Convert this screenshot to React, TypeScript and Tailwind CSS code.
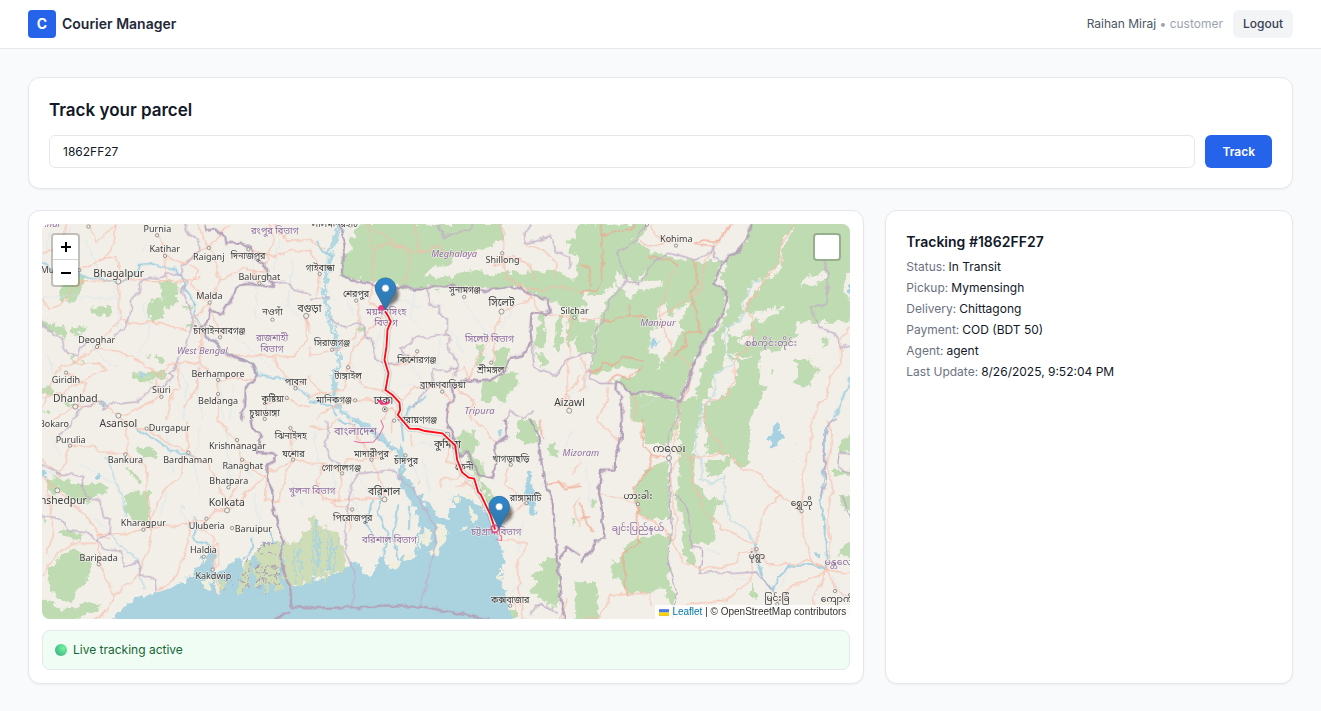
import { useState } from "react";

type Shape = { x: number; y: number; d: string };
type Label = [x: number, y: number, text: string, kind?: "city" | "region" | "country" | "state"];

// Map geometry is kept in six blocks, each offset by x / y in map units.
const FOREST: Shape[] = [
  { x: 0, y: 0, d: "M55 182L85 170 128 164 132 190 120 215 118 240 98 245 85 238 58 240 54 220 66 205ZM358 186L372 182 410 185 413 215 405 230 420 248 385 262 368 258 372 282 350 296 345 308 322 304 328 285 320 275 325 248 342 236 368 236 370 212 362 205ZM150 262L180 258 212 262 208 280 188 292 160 282 150 275ZM95 330L118 316 140 322 118 338 100 346ZM6 302L22 302 40 316 66 322 86 338 74 352 50 344 30 330 6 322ZM436 314L455 308 462 322 444 328ZM270 458L295 452 318 462 338 448 366 450 378 460 372 478 345 474 330 484 296 484 272 470ZM120 428L138 432 130 440ZM88 408L105 412 96 425ZM344 412L370 410 378 425 352 428ZM316 404L336 402 330 412ZM6 498L28 500 46 510 40 524 18 522 6 526ZM70 550L95 545 112 555 85 562ZM426 258L452 256 458 264 430 268ZM8 570L36 572 30 584Z" },
  { x: 810, y: 0, d: "M150 12L580 12 575 60 545 78 500 90 430 105 410 140 370 140 340 168 420 176 450 158 510 152 540 172 590 150 640 168 655 150 700 158 740 150 790 180 810 184 830 262 760 262 720 240 670 222 620 198 560 210 520 205 430 196 330 204 240 200 180 188 92 166 98 108 132 92 115 68ZM770 60L830 50 830 98 780 104ZM504 370L516 372 518 430 500 436ZM555 398L580 380 596 388 590 450 552 440ZM520 485L555 478 590 460 622 455 628 495 600 515 580 550 550 530 540 545 512 540ZM142 320L165 318 162 334 148 336ZM370 210L392 208 388 218 374 218ZM690 270L706 280 700 330 712 340 700 380 680 388 674 350 684 330ZM740 282L760 290 752 340 760 360 742 392 728 380 738 340ZM775 270L800 260 806 330 780 380 768 360ZM680 400L708 400 716 432 690 442Z" },
  { x: 1620, y: 0, d: "M-10 12L200 12 190 50 160 62 200 82 220 100 260 102 300 118 345 122 425 125 405 190 440 215 435 260 410 320 380 350 340 420 302 548 262 528 205 520 150 520 110 485 60 488 32 455 40 400 48 330 64 285 84 235 110 215 108 190 60 230 -10 210ZM510 0L830 0 830 305 650 305 648 345 628 370 600 390 540 395 536 490 562 500 545 535 510 595 505 730 482 750 452 705 300 700 298 545 345 530 370 430 390 350 430 310 448 240 420 170 430 128 500 65ZM724 356L744 354 742 378 724 378ZM640 420L694 420 694 440 716 438 714 465 694 466 692 498 640 494 650 470ZM568 442L576 440 576 462 568 465ZM-10 300L48 302 38 400 -10 398ZM150 516L300 546 290 620 262 672 196 672 186 610 150 600Z" },
  { x: 0, y: 600, d: "M28 450L70 405 96 388 124 394 148 420 152 450 138 488 118 505 104 540 76 546 50 528 30 500 24 472ZM40 168L65 176 85 180 120 195 150 190 180 192 205 202 200 222 165 226 145 246 110 240 82 228 55 198ZM255 232L270 215 300 220 330 212 328 250 336 288 316 314 278 302 252 274ZM280 90L305 80 330 84 355 96 346 108 305 104ZM252 142L270 148 290 165 308 185 300 195 280 170ZM0 532L36 548 60 575 110 560 148 546 180 556 170 572 128 582 98 610 0 610ZM0 280L20 300 12 315ZM60 330L100 335 132 345 125 362 85 355 60 345ZM20 170L48 180 60 215 42 232 24 205Z" },
  { x: 810, y: 600, d: "M438 46L460 38 498 36 504 75 486 92 495 118 520 134 524 175 505 178 480 140 468 98 448 112ZM505 182L525 190 548 235 562 262 570 298 555 290 530 245ZM622 0L676 0 682 40 690 68 650 72 620 50ZM712 66L735 64 732 80 748 94 736 110 714 105ZM658 468L690 450 700 420 740 412 750 480 745 565 712 556 694 530 660 520 664 505 690 486ZM785 290L795 292 790 325ZM798 486L815 486 815 610 798 610ZM600 560L620 580 618 598 600 590Z" },
  { x: 1620, y: 600, d: "M294 80L345 80 345 110 340 170 362 205 372 232 398 234 432 246 402 256 402 290 400 368 340 374 330 390 346 410 344 436 318 418 306 384 310 300 288 240 298 170 292 90ZM372 128L400 122 460 110 440 145 420 165 388 172ZM200 148L222 136 262 126 268 200 272 296 215 298 172 284 162 235 172 188ZM184 348L272 344 265 430 264 490 290 520 282 560 266 550 254 500 210 515 140 520 122 480 96 475 96 420 120 420 134 380ZM-10 486L52 486 52 610 -10 610ZM34 240L46 238 46 262 34 262ZM778 70L830 30 830 95 776 100ZM755 150L830 148 830 165 768 170ZM776 228L830 216 830 285 790 270ZM796 370L830 360 830 420 770 400ZM512 480L522 510 530 538 512 530Z" },
];

const CLEARINGS: Shape[] = [
  { x: 1620, y: 0, d: "M108 190L112 160 135 172 165 185 190 158 188 186 245 180 240 202 205 206 176 215 150 235 125 215ZM234 262L252 250 270 290 302 262 330 250 296 310 308 330 290 360 278 392 262 404 235 448 240 410 212 398 208 360 215 330 228 320ZM220 0L505 0 500 60 470 92 430 125 400 122 400 92 370 90 345 104 310 118 290 112 235 100 250 80 218 48ZM545 178L520 182 508 215 488 245 490 270 470 310 440 320 445 340 480 352 500 330 520 300 550 302 612 268 590 258 560 272 510 284 494 272 510 235 540 200ZM635 20L600 80 600 130 560 170 548 184 590 160 608 130 606 85 640 30ZM405 320L398 380 358 462 340 505 352 530 300 545 342 418 380 352ZM715 158L740 160 730 180 705 196 675 190 662 206 668 180ZM782 210L796 160 820 158 820 240 796 232ZM425 130L442 140 432 155 420 150ZM36 465L110 440 172 448 165 470 100 482 60 490ZM432 318L446 345 440 400 470 430 470 480 448 512 400 542 372 560 366 600 382 640 378 700 338 715 348 640 362 590 366 560 392 500 400 465 430 440 436 400 424 360ZM446 400L500 408 520 412 470 418ZM470 360L500 350 530 356 500 372ZM430 450L446 470 436 500 410 514 408 480Z" },
];

const MANGROVE: Shape[] = [
  { x: 0, y: 600, d: "M728 378L760 362 775 370 790 335 810 330 810 494 790 480 780 498 764 490 755 502 734 476ZM655 384L690 372 724 364 722 395 724 440 715 470 728 505 714 515 696 488 680 524 668 488 644 510 642 450 652 425 642 400ZM618 412L636 418 634 460 620 500 608 526 590 520 602 470ZM545 468L556 482 550 510 534 498Z" },
  { x: 810, y: 600, d: "M-2 300L12 290 24 298 35 325 52 316 70 335 84 345 106 400 104 450 86 460 76 448 64 470 52 455 44 488 30 465 20 478 8 470 -2 494Z" },
];

const SEA: Shape[] = [
  { x: 0, y: 600, d: "M208 610L240 568 275 542 330 524 370 510 420 494 455 466 474 442 484 412 504 404 520 384 528 410 520 452 545 458 560 440 582 424 604 412 612 450 632 408 648 405 665 375 696 370 724 364 734 460 748 500 770 495 812 488 812 610Z" },
  { x: 810, y: 600, d: "M-10 476L28 480 60 466 104 450 124 428 150 434 154 458 182 466 198 440 212 405 228 432 248 428 240 452 258 448 274 405 300 424 322 392 318 360 330 315 312 262 288 230 270 196 262 170 272 130 262 96 274 70 282 92 284 130 278 160 304 190 320 212 360 262 392 296 408 298 438 258 424 238 430 226 456 226 488 240 516 262 538 288 550 328 566 360 576 388 580 430 574 472 586 520 600 560 614 610 -10 610Z" },
];

const ISLANDS: Shape[] = [
  { x: 0, y: 600, d: "M494 405L502 412 492 434 484 430ZM505 470L516 476 510 512 494 505 488 485ZM525 475L535 480 542 520 532 526 528 505Z" },
  { x: 810, y: 600, d: "M430 232L446 228 452 240 446 250 432 246ZM472 264L486 266 500 294 494 316 480 306ZM462 318L472 318 470 330 458 326ZM385 306L398 310 412 335 406 362 388 382 384 400 370 408 364 396 378 366 376 340ZM346 325L362 328 364 360 350 380 340 370 336 350ZM330 335L338 360 332 385 324 380ZM292 395L306 402 292 424 280 420ZM240 418L262 420 268 436 248 452 236 440ZM566 450L572 445 574 480 568 482ZM468 222L490 232 484 240 472 236Z" },
];

const RIVERS: Shape[] = [
  { x: 0, y: 0, d: "M0 126L40 150 70 142 92 162 130 172 180 176 226 186 262 182 286 158 300 134 334 130 376 144 402 148 428 176 430 206 462 240 464 286 484 322 498 352 534 376 566 404 606 420 640 430 652 460 694 472 738 478 770 506 810 530" },
  { x: 0, y: 600, d: "M276 10L318 46 352 62 392 94 440 102 462 110M462 290L470 316 460 350 478 366 510 376 520 400M612 410L640 392 636 350M700 370L690 330" },
  { x: 810, y: 0, d: "M350 530L300 560 284 600M20 60L40 95 66 110M0 540L60 555 84 590" },
  { x: 810, y: 600, d: "M130 0L190 44 240 82 270 92M274 0L280 70M208 200L206 280 232 340 218 410M186 240L168 310 190 350M262 250L250 340 262 420M300 260L296 330M18 300L22 440M66 350L60 450M84 0L140 20M655 156L650 190 668 212 658 234 668 288M568 28L574 50" },
  { x: 1620, y: 0, d: "M810 470L796 520 780 560 760 596" },
  { x: 1620, y: 600, d: "M524 370L530 420 552 480 578 512 590 480 630 440 690 434 736 450 736 330 720 250 734 130 734 30 760 0" },
];

const STREAMS: Shape[] = [
  { x: 0, y: 0, d: "M92 24L60 70 80 130M220 186L232 240 236 330M300 96L330 60M6 236L90 225 150 234 230 236M610 60L640 150 650 220 648 300M700 150L720 60M480 400L470 500 490 600M540 480L550 600M130 340L190 420 230 440M280 460L330 468M180 540L200 548M410 420L440 500 430 600M760 120L740 260 790 300M580 500L570 600M140 60L170 140M30 30L20 90M560 330L600 360 690 440M310 250L330 340 300 400M20 400L50 480" },
  { x: 810, y: 0, d: "M140 220L150 300 120 420 150 500M210 330L190 400 240 500M320 210L300 290 340 330M450 230L500 300 550 350M540 420L500 380M620 250L570 320M260 240L330 260M300 430L330 480M390 360L380 440M740 560L790 520M560 560L600 540M280 490L330 500 350 530M110 230L130 290M420 330L460 400" },
  { x: 0, y: 600, d: "M6 150L60 170M120 130L170 160 240 200M480 20L460 140 480 220M560 30L570 180M380 30L400 160M420 250L440 320M620 140L640 180M150 290L200 320M60 250L30 210M760 180L790 260M640 220L660 330M780 40L740 100M30 50L70 110M380 220L360 280" },
  { x: 810, y: 600, d: "M180 0L210 60M330 70L400 90M340 120L360 220M10 20L30 160M60 110L80 220M640 300L620 400M580 300L600 340M600 520L640 490M720 150L690 200M786 30L760 90M120 140L130 240 150 290M150 180L186 240M290 110L330 190" },
  { x: 1620, y: 0, d: "M0 430L20 470M212 350L232 360 220 380M290 280L304 270M760 440L768 438M6 470L20 520M180 560L230 540" },
  { x: 1620, y: 600, d: "M380 390L420 400M450 470L500 480M700 540L720 520M630 130L640 126M640 70L650 70M560 510L550 600M620 460L600 500M760 470L790 540M20 140L30 260" },
];

// The Chindwin and the upper Kolodyne headwaters.
const LIGHT_RIVERS: Shape[] = [
  { x: 0, y: 600, d: "M196 110L230 190 248 240 258 290M210 344L260 390 292 420 300 470 316 510" },
  { x: 1620, y: 0, d: "M540 180L512 190 508 222 486 250 490 290 470 310 436 320 432 350 438 392 460 430 430 444 400 465 408 500 386 545 362 560 364 600" },
  { x: 1620, y: 600, d: "M364 0L346 40 344 80 368 150 360 178 400 190 434 168 430 230 452 300 500 330 524 370" },
];

const LAKES: Shape[] = [
  { x: 1620, y: 600, d: "M560 50L578 46 574 24 584 14 598 18 600 34 610 46 604 60 592 62 590 80 576 82 570 66 556 62ZM704 396L718 400 716 412 702 410Z" },
  { x: 1620, y: 0, d: "M212 352L228 350 232 366 222 380 210 374ZM804 200L820 195 820 235 804 230Z" },
  { x: 810, y: 600, d: "M650 156L662 160 664 200 680 222 672 240 676 290 662 282 648 240 642 200 654 190Z" },
  { x: 0, y: 600, d: "M160 168L175 158 188 168 180 178ZM0 150L22 155 18 172 0 170ZM424 258L430 256 430 268Z" },
  { x: 0, y: 0, d: "M300 462L312 456 318 468 306 476ZM182 538L196 540 200 554 186 560Z" },
];

const ROADS: Shape[] = [
  { x: 0, y: 0, d: "M80 12L68 60 40 90 6 100M150 12L170 70 228 12M228 12L222 70 190 114M190 114L120 150 90 180 120 186 240 180 430 184 480 170M350 40L375 108 380 180M375 108L430 130 500 84M240 180L230 110 190 114M235 186L240 300 170 380M240 300L300 312 360 306 410 328 450 330M6 240L30 268 60 258 100 210 120 186M170 380L100 432 60 440 30 500 6 560M170 380L240 396 310 430 350 460 380 480M100 432L180 430 200 450 150 470 60 520 6 530M78 456L140 490 110 560M106 560L180 548 240 590 360 532M106 560L40 600M364 530L350 480 390 430 450 428 480 430 534 480 534 600M480 430L484 330 460 300 508 248M508 248L540 180 510 90 470 12M508 248L530 320 550 352M452 134L470 150 450 190 500 240M508 84L570 12M540 180L610 146 670 160 700 60 690 12M625 88L700 110 760 90 810 96M658 190L640 150M810 290L798 290 810 340M798 290L800 360 760 410 700 408 660 404 560 410M700 410L720 450 766 504M740 534L680 550 674 600M410 434L420 500 400 510 380 600M534 480L600 474 640 480M430 560L470 500 480 440M700 12L740 60 810 60M766 504L810 470M740 534L780 560 810 556" },
  { x: 810, y: 0, d: "M0 90L30 160 20 230M0 60L50 90M172 12L190 100 188 190 180 250 216 262M188 95L230 70 330 98 390 80 412 108 500 100M190 30L290 90 300 130 280 200M310 12L330 98M576 12L580 90 550 140 610 110 650 130 680 180M640 70L700 90 740 130 738 170M575 100L590 170 630 200 660 230 640 250 574 272M574 272L552 340 550 420 542 430M660 230L690 280 790 294M552 340L500 420 480 480 460 440 430 460 430 500M138 240L150 330 90 390 60 384M66 388L0 410 0 380M114 442L120 400 160 350 216 290M114 442L160 500 210 510 232 512M134 540L180 540 230 560M232 512L280 540 310 500 390 500 400 510M222 430L290 430 320 394M396 512L420 540 410 600M40 520L100 510 114 442M0 480L40 520 0 530M430 500L490 540 480 600M790 294L770 350 780 400 770 470 776 570M620 200L700 210 760 200 810 215M740 560L810 470M216 600L240 560 270 600M20 600L60 560 134 540" },
  { x: 0, y: 600, d: "M6 170L50 210 90 240 140 290 176 344M6 120L60 170 90 76 160 80 210 100 256 102M256 102L264 60 256 0M256 102L320 140 326 300M176 344L260 340 310 328 400 316 496 300 530 270 560 270M310 328L340 280 360 230 390 190 420 170 430 130 445 98M240 0L320 30 390 70 445 98M445 98L500 130 530 180 560 270M445 98L440 0M530 0L560 30 590 60 606 118 600 170 570 240M176 344L176 430 200 480 222 530M176 370L100 370 50 400 6 470M176 344L210 360M222 530L200 570 160 600M222 530L290 470 300 440 330 380 330 310M360 510L410 470 430 400 450 340 445 300M496 300L480 330 520 350 520 450M520 380L536 370 534 430 520 450M606 118L680 180 676 240 720 245M758 118L810 130M758 118L710 150 680 150M750 20L758 118M758 118L730 180 720 240 690 245M20 180L30 280 45 330 20 400M560 270L600 240 640 200 680 160M520 450L540 520" },
  { x: 810, y: 600, d: "M0 20L50 30 80 0M0 130L40 130 96 158 110 120 184 118M96 158L90 230 60 250 126 268M0 210L60 240 110 235 220 236 222 200 184 118M126 268L120 330M184 118L250 90M250 0L240 40M300 40L310 80M390 205L394 176 440 176 456 160M318 195L326 178M420 50L410 120 450 150M440 200L470 190 500 210 520 262M553 328L570 360 600 360 650 368 636 400 620 420 624 480 630 530 640 600M570 350L562 300 602 280 650 248M602 130L580 190 620 220 650 248M490 0L520 20 546 60 560 70M600 556L620 530 616 590M810 190L780 200 740 186 712 190M786 160L810 120M810 230L790 260 810 320M770 540L750 600M40 130L20 200 40 240M184 118L150 60 120 0" },
  { x: 1620, y: 0, d: "M295 130L270 180 240 260 240 310 270 370 266 420M240 290L300 250 340 230 360 210 372 130 410 70 455 12M640 12L600 80 602 120 560 170 520 230 490 270 515 290 520 330 500 380 460 430 466 480 440 530 380 545 370 600M780 360L810 320M780 360L782 430 750 470 740 530 710 560 700 600M50 600L80 540 84 500M0 410L20 450 0 520M0 300L60 300M280 400L300 410 332 440 320 520 300 545 296 600M155 510L170 560 160 600M215 12L225 50 280 60 200 80 165 55" },
  { x: 1620, y: 600, d: "M296 0L280 80 300 100 330 112M300 110L270 150 275 230 290 300 280 360 310 430 370 445 470 430 480 400 524 390M330 112L335 180 370 270 420 320 520 370M330 112L410 104 440 100 490 148 540 160 570 205 600 225M524 370L540 300 570 250 600 225 650 260 664 274M664 274L670 140 690 90 694 0M664 274L670 360 700 430 740 450M524 380L560 430 640 434 690 420 740 450M740 450L750 360 740 300 756 200 738 130 760 60 740 0M740 450L810 460M740 450L770 510 810 540M740 450L700 540 730 600M740 455L630 498 610 520 594 550M524 390L510 480 440 540 300 555M55 220L170 250 176 280 240 320 280 360M0 600L60 590 90 530 130 520 210 520 212 560M50 0L70 20 120 65M370 0L390 40 425 80 410 104" },
];

// Hill roads, drawn stronger than the trunk network.
const HILL_ROADS: Shape[] = [
  { x: 1620, y: 0, d: "M60 12L66 50 64 180 50 210 0 218M66 48L100 40 150 30 162 12M0 135L25 140 32 200M400 78L340 70 370 60 420 66 446 12M345 122L350 190 335 225 345 270 362 340 330 330 310 345 320 380 280 404M60 300L90 306 146 285 200 292M146 255L150 285M18 455L60 452 70 425 100 440 130 410 190 420M80 490L115 460 145 476 190 440M205 110L270 118 292 138" },
  { x: 1620, y: 600, d: "M190 0L185 70 215 105 240 112 262 114M215 105L210 140 185 175 160 200 170 250 176 370 130 400 132 460 140 520M0 250L22 320 38 335M0 300L30 290" },
  { x: 810, y: 600, d: "M690 0L700 60M712 190L740 184 768 206 810 198" },
];

const STATE_LINES: Shape[] = [
  { x: 0, y: 0, d: "M430 12L452 46 476 60 480 100 460 110 440 130 422 138 425 165 440 186 424 212 446 262 460 298 446 345 430 400 412 420 405 450 385 460 400 472 372 495 330 500 320 520 290 545 250 550 220 548 190 570 188 545 130 555 110 580 96 600M425 165L382 165 358 175 330 172 300 190 304 220 276 230 270 290 250 330 222 346M150 360L122 380 115 410 86 404 70 376 66 350 40 346 6 310M700 186L750 190 760 210 810 222" },
  { x: 0, y: 600, d: "M96 0L80 30 54 50M6 135L50 160 90 165 132 170 120 200 140 230 180 240 190 290 212 300 210 344 176 360 190 384 240 395 250 440 290 425 300 460 350 480 354 512M6 285L60 300 86 330 140 335 176 362" },
  { x: 810, y: 0, d: "M355 208L356 252 386 256 390 290 412 300 410 344 350 350 310 352 300 375 272 380 278 400 296 406 280 420 240 432 200 424 186 360 164 345 164 316 132 312 100 320 60 300M412 344L418 400 440 420 440 470M440 440L410 456 370 446 366 490 330 530 310 560M0 236L60 232M660 12L640 48 648 68 720 48 740 96 778 110 780 150M380 12L400 52 440 40 480 30 484 12M665 372L672 440 736 466 770 420 810 404M586 600L600 572 640 592 670 574" },
  { x: 810, y: 600, d: "M45 0L56 40 46 80 60 120 92 132M150 160L190 155 250 150M150 160L120 200 112 268 104 350 108 400 134 454 128 562M250 150L300 200 340 260 378 324 372 400 330 558M660 590L680 552 710 560 740 580" },
  { x: 1620, y: 0, d: "M200 12L165 60 108 100 140 180 176 194 218 126 260 100 310 110 345 120 390 98 400 70 400 110 425 128M140 180L90 240 70 300 50 330 45 400 0 404M40 405L25 470 60 490 106 490M735 120L745 180 740 250 690 262 716 320 760 340 780 380 810 375M298 546L290 600" },
  { x: 1620, y: 600, d: "M290 0L262 60 270 120 266 220 275 300 264 430 290 520 272 600M272 225L300 230 328 290 334 380 364 386 362 460 395 455 460 460 530 456 552 480 576 512M720 230L736 190 730 60 745 12 770 0M810 98L776 100 772 140 810 160M785 230L810 290" },
];

const BORDERS: Shape[] = [
  { x: 0, y: 0, d: "M492 12L498 32 525 28 552 52 556 70 604 68 632 84 645 120 674 128 682 176 702 186 698 204 660 196 620 192 590 200 570 244 544 285 510 264 505 300 486 322 494 348 532 372 560 402 600 420 638 430 650 462 636 490 614 500 612 560 604 600" },
  { x: 0, y: 600, d: "M634 0L640 30 662 48 650 98 706 104 700 124 682 134 682 170 696 210 700 262 712 310 732 370 722 420 746 500 755 560M755 576L700 600M755 560L810 565" },
  { x: 810, y: 0, d: "M90 12L104 84 94 166 140 184 200 196 245 200 320 206 420 198 470 208 530 214 600 202 640 210 686 232 714 240 722 270 706 284 664 276 660 330 664 366 640 402 600 410 588 450 540 478 470 484 420 494 428 540 410 560 408 600" },
  { x: 810, y: 600, d: "M408 0L432 60 450 108 470 92 492 132 510 168 548 176 556 120 554 70 590 50 586 0M0 564L180 560 330 558 450 582 540 600M662 0L684 50 692 120 704 184 726 240 736 350 748 470 756 560 764 600M752 418L768 380 810 408" },
  { x: 1620, y: 0, d: "M510 12L508 50 470 92 425 128 402 192 438 214 436 262 410 318 376 358 340 430 320 500 298 546 262 530 218 516 150 520 124 490 108 486 106 510 122 530 125 600" },
  { x: 1620, y: 600, d: "M125 0L120 66 102 112 100 152 62 152 56 220 68 270 66 306 76 352 46 364 30 398 0 428" },
];

const LABELS: Label[] = [
  [352, 36, "Purnia"], [374, 96, "Katihar"], [506, 120, "Raiganj"], [624, 118, "দিনাজপুর"],
  [236, 170, "Bhagalpur", "city"], [658, 180, "Balurghat"], [508, 236, "Malda"], [697, 286, "নওগাঁ"],
  [808, 275, "বগুড়া", "city"], [538, 342, "চাঁপাইনবাবগঞ্জ"], [696, 362, "রাজশাহী", "region"],
  [696, 395, "বিভাগ", "region"], [704, 42, "রংপুর বিভাগ", "region"], [170, 370, "Deoghar"],
  [487, 402, "West Bengal", "state"], [78, 490, "Giridih"], [534, 470, "Berhampore"], [364, 520, "Siuri"],
  [534, 552, "Beldanga"], [106, 545, "Dhanbad", "city"], [767, 494, "পাবনা"], [698, 545, "কুষ্টিয়া"],
  [674, 588, "চুয়াডাঙ্গা"], [30, 22, "Bihar", "state"], [52, 160, "Munger"], [235, 620, "Asansol", "city"],
  [388, 634, "Durgapur"], [42, 622, "Bokaro"], [92, 668, "Purulia"], [256, 730, "Bankura"],
  [444, 728, "Bardhaman"], [592, 688, "Krishnanagar"], [608, 748, "Ranaghat"], [752, 656, "ঝিনাইদহ"],
  [760, 710, "যশোর"], [566, 791, "Bhatpara"], [560, 857, "Kolkata", "city"], [500, 927, "Uluberia"],
  [640, 935, "Baruipur"], [310, 918, "Kharagpur"], [70, 852, "nshedpur", "city"], [176, 1022, "Baripada"],
  [490, 998, "Haldia"], [520, 1077, "Kakdwip"], [816, 822, "খুলনা বিভাগ", "region"],
  [884, 22, "লালমনিরহাট"], [840, 152, "গাইবান্ধা"], [948, 232, "শেরপুর"], [1274, 220, "সুনামগঞ্জ"],
  [1384, 258, "সিলেট", "city"], [1387, 130, "Shillong"], [1242, 110, "Meghalaya", "state"],
  [1038, 284, "ময়মনসিংহ", "region"], [1038, 317, "বিভাগ", "region"], [1348, 365, "সিলেট বিভাগ", "region"],
  [876, 377, "সিরাজগঞ্জ"], [1130, 428, "কিশোরগঞ্জ"], [1352, 460, "শ্রীমঙ্গল"], [924, 476, "টাঙ্গাইল"],
  [1208, 504, "ব্রাহ্মণবাড়িয়া"], [882, 550, "মানিকগঞ্জ"], [1030, 552, "ঢাকা", "city"],
  [1318, 583, "Tripura", "state"], [1603, 283, "Silchar"], [1588, 558, "Aizawl", "city"],
  [1132, 610, "নারায়ণগঞ্জ"], [946, 644, "বাংলাদেশ", "country"], [994, 710, "মাদারীপুর"],
  [1098, 732, "চাঁদপুর"], [904, 752, "গোপালগঞ্জ"], [1222, 684, "কুমিল্লা", "city"], [1272, 750, "ফেনী"],
  [1412, 725, "খাগড়াছড়ি"], [1032, 824, "বরিশাল", "city"], [938, 902, "পিরোজপুর"],
  [1048, 968, "বরিশাল বিভাগ", "region"], [1456, 842, "রাঙ্গামাটি"], [1368, 946, "চট্টগ্রাম বিভাগ", "region"],
  [1410, 1148, "কক্সবাজার"], [1622, 709, "Mizoram", "state"], [1908, 66, "Kohima"],
  [1853, 318, "Manipur", "state"], [2192, 378, "စစ်ကိုင်းတိုင်း", "region"], [1887, 696, "ကလေး", "city"],
  [1793, 838, "ဟားခါး"], [1793, 934, "ချင်းပြည်နယ်", "region"], [2284, 858, "ရွှေဘို"],
  [2150, 1018, "မုံရွာ"], [2210, 1142, "မြင်းခြံ"], [2390, 1146, "ကျောက်"], [2400, 1034, "မန္တလေး", "region"],
];

const TOWNS: [number, number][] = [
  [145, 20], [351, 46], [375, 108], [506, 84], [625, 88], [118, 151], [658, 190], [509, 248], [697, 299],
  [540, 352], [171, 381], [78, 458], [534, 480], [364, 531], [534, 522], [766, 505], [740, 534], [674, 597],
  [320, 626], [90, 677], [256, 703], [445, 698], [591, 660], [606, 719], [751, 624], [759, 719], [565, 802],
  [499, 896], [576, 924], [310, 929], [176, 1033], [491, 1010], [518, 1049], [839, 162], [948, 242],
  [1272, 231], [1386, 100], [876, 389], [1131, 394], [1353, 428], [924, 442], [1206, 515], [945, 541],
  [1603, 293], [1062, 602], [994, 719], [1096, 706], [906, 760], [1412, 734], [936, 868], [1459, 849],
  [1410, 1157], [1907, 77], [1793, 852], [2284, 873], [2149, 987], [2211, 1152], [2384, 1113], [1820, 14],
];

const CITIES: [number, number][] = [
  [235, 185], [798, 288], [106, 560], [235, 587], [52, 811], [561, 871], [1384, 275], [1587, 572],
  [1034, 568], [1033, 838], [1886, 714], [1222, 644],
];

const ROUTE =
  "M1036 276L1042 285 1052 305 1042 330 1039 380 1033 420 1045 460 1036 510 1056 524 1078 548 1080 570 1073 585 1108 626 1135 627 1155 633 1207 640 1245 676 1251 720 1266 757 1286 773 1302 776 1314 816 1322 824 1340 862 1350 882 1364 926";

function Shapes({ items }: { items: Shape[] }) {
  return (
    <>
      {items.map((s, i) => (
        <path key={i} d={s.d} transform={`translate(${s.x} ${s.y})`} />
      ))}
    </>
  );
}

function Pin({ x, y }: { x: number; y: number }) {
  return (
    <g transform={`translate(${x} ${y}) scale(2.5)`}>
      <path d="M0 38L14 27C18 20 16 10 9 11Z" fill="#000" opacity="0.5" filter="url(#pinBlur)" />
      <path
        d="M0-.6L-10.6-20.5C-11.6-22.4-12.2-24.8-12.2-26.8C-12.2-33.6-6.8-39-0-39S12.2-33.6 12.2-26.8C12.2-24.8 11.6-22.4 10.6-20.5Z"
        transform="translate(0 39)"
        fill="url(#pinFill)"
        stroke="#2e6c97"
        strokeWidth="1"
      />
      <circle cx="0" cy="12.4" r="4.4" fill="#fff" stroke="#2e6c97" strokeWidth="0.6" />
    </g>
  );
}

function TrackingMap() {
  return (
    <svg viewBox="6 12 2424 1185" preserveAspectRatio="xMidYMid slice" className="block h-full w-full" role="img" aria-label="Parcel route map">
      <defs>
        <linearGradient id="pinFill" x1="0" y1="0" x2="0" y2="1">
          <stop offset="0" stopColor="#2e87cd" />
          <stop offset="1" stopColor="#3274a8" />
        </linearGradient>
        <filter id="pinBlur" x="-50%" y="-50%" width="200%" height="200%">
          <feGaussianBlur stdDeviation="2" />
        </filter>
        <filter id="coast" filterUnits="userSpaceOnUse" x="0" y="0" width="2440" height="1210" colorInterpolationFilters="sRGB">
          <feTurbulence type="fractalNoise" baseFrequency="0.05" numOctaves="3" seed="4" />
          <feDisplacementMap in="SourceGraphic" scale="30" xChannelSelector="R" yChannelSelector="G" />
        </filter>
        <filter id="wiggle" filterUnits="userSpaceOnUse" x="0" y="0" width="2440" height="1210" colorInterpolationFilters="sRGB">
          <feTurbulence type="fractalNoise" baseFrequency="0.035" numOctaves="2" seed="9" />
          <feDisplacementMap in="SourceGraphic" scale="20" xChannelSelector="R" yChannelSelector="G" />
        </filter>
      </defs>
      <rect x="0" y="0" width="2440" height="1210" fill="#f2efe9" />
      <g filter="url(#coast)">
        <rect x="0" y="0" width="2440" height="1210" fill="#f2efe9" />
        <g fill="#bfdbb2"><Shapes items={FOREST} /></g>
        <g fill="#f2efe9"><Shapes items={CLEARINGS} /></g>
        <g fill="#aad3df"><Shapes items={SEA} /></g>
        <g fill="#cfddb6"><Shapes items={MANGROVE} /></g>
        <g fill="none" stroke="#a99bb4" strokeWidth="3" strokeDasharray="14 7">
          <path d="M646 1035L670 1040 692 1035 718 1050M648 1060L672 1055 694 1065 720 1060M644 1085L668 1078 690 1090 722 1085M655 1030L660 1115M680 1032L676 1120M702 1038L706 1100M655 985L690 972 722 966M660 1005L715 1000M600 1080L622 1090 604 1060 630 1056M560 1060L575 1090M540 1065L556 1082 550 1110M618 1012L634 1030 620 1100 606 1122" />
        </g>
        <g fill="none" stroke="#aad3df" strokeWidth="4">
          <path d="M760 980L768 1090M784 950L776 1020 790 1080M818 910L822 1070M840 930L836 1030 846 1070M866 930L862 1060M890 960L880 1050" />
        </g>
        <g fill="#f0efdd"><Shapes items={ISLANDS} /></g>
        <g fill="#a5d1e2"><Shapes items={LAKES} /></g>
        <path
          d="M900 12L884 60 868 110 862 160 852 210 860 256 870 300 884 344 894 388 898 430 880 480 884 530 900 570 960 610 1010 640 1050 680"
          fill="none" stroke="#b3d8e2" strokeWidth="16" strokeLinejoin="round"
        />
        <path
          d="M902 12L890 70 862 120 868 180 848 230 866 290 880 330 900 380 892 440 888 500 894 550 940 600"
          fill="none" stroke="#eef0ea" strokeWidth="5" strokeDasharray="24 12"
        />
      </g>
      <g filter="url(#wiggle)" fill="none" strokeLinejoin="round">
        <g stroke="#d3e6eb" strokeWidth="2"><Shapes items={STREAMS} /></g>
        <g stroke="#b8dae4" strokeWidth="3.4"><Shapes items={LIGHT_RIVERS} /></g>
        <g stroke="#a8d2e0" strokeWidth="6"><Shapes items={RIVERS} /></g>
        <g stroke="#f8bba7" strokeWidth="3"><Shapes items={ROADS} /></g>
        <g stroke="#f2a58c" strokeWidth="3.6"><Shapes items={HILL_ROADS} /></g>
        <g stroke="#c1aec6" strokeWidth="4"><Shapes items={STATE_LINES} /></g>
        <g stroke="#b3a0b8" strokeWidth="7"><Shapes items={BORDERS} /></g>
      </g>
      <g fill="none" stroke="#e56f9c" strokeWidth="3">
        <path d="M1022 600L1030 620 1018 645 1000 666 960 668 942 664M1370 940L1384 948 1384 962 1366 958" />
      </g>
      <g fill="#f2efe9" stroke="#6d6d6d" strokeWidth="2">
        {TOWNS.map(([cx, cy]) => <circle key={`${cx}-${cy}`} cx={cx} cy={cy} r="5" />)}
        {CITIES.map(([cx, cy]) => <circle key={`${cx}-${cy}`} cx={cx} cy={cy} r="7.5" />)}
      </g>
      <circle cx="1034" cy="568" r="3" fill="#555" />
      <g
        textAnchor="middle" stroke="#f7f5f1" strokeOpacity="0.7" strokeWidth="4" strokeLinejoin="round"
        style={{ paintOrder: "stroke", fontFamily: '"Noto Sans", "Noto Sans Bengali", "Noto Sans Myanmar", "DejaVu Sans", sans-serif' }}
      >
        {LABELS.map(([x, y, text, kind]) => (
          <text
            key={`${x}-${y}`} x={x} y={y}
            fontSize={kind === "city" ? 31 : kind === "country" ? 33 : kind ? 28 : 27}
            fill={kind && kind !== "city" ? "#8d6c9c" : "#3c3c3c"}
            fontStyle={kind === "state" ? "italic" : "normal"}
          >
            {text}
          </text>
        ))}
      </g>
      <path d="M1014 268a10 10 0 0 1 14-12l10 4v12h-18ZM1012 540h12l6 8h10l6-8 4 8-10 6h-18Z" fill="#e83b7d" />
      <g fill="none" strokeLinejoin="round" strokeLinecap="round">
        <path d={ROUTE} stroke="#000" strokeOpacity="0.12" strokeWidth="20" />
        <path d={ROUTE} stroke="#fff" strokeOpacity="0.7" strokeWidth="14" />
        <path d={ROUTE} stroke="#ff0a12" strokeWidth="5.5" />
      </g>
      <circle cx="1364" cy="926" r="11" fill="none" stroke="#e0508a" strokeWidth="5" />
      <Pin x={1036} y={174} />
      <Pin x={1377} y={829} />
    </svg>
  );
}

const DETAILS = [
  ["Status", "In Transit"],
  ["Pickup", "Mymensingh"],
  ["Delivery", "Chittagong"],
  ["Payment", "COD (BDT 50)"],
  ["Agent", "agent"],
  ["Last Update", "8/26/2025, 9:52:04 PM"],
];

const CARD = "rounded-xl border border-gray-200 bg-white shadow-xs";

export default function App() {
  const [code, setCode] = useState("1862FF27");

  return (
    <div className="min-h-screen bg-[#f9fafb] font-['Inter',sans-serif] text-xs leading-5 text-[#111827]">
      <header className="flex items-center justify-between border-b border-gray-200 bg-white px-7 py-[10px]">
        <div className="flex items-center gap-[6px]">
          <div className="flex size-7 items-center justify-center rounded bg-[#2563eb] text-sm font-bold text-white">C</div>
          <span className="text-sm font-semibold text-[#1f2937]">Courier Manager</span>
        </div>
        <div className="flex items-center gap-[10px]">
          <span className="text-[#4b5563]">
            Raihan Miraj <span className="text-[#9ca3af]">• customer</span>
          </span>
          <button type="button" className="h-7 rounded-md bg-[#f3f4f6] px-[10px] font-medium text-[#374151]">Logout</button>
        </div>
      </header>

      <main className="flex flex-col gap-[21px] p-7">
        <section className={`${CARD} p-5`}>
          <h1 className="mb-[13px] text-[17px] leading-6 font-semibold">Track your parcel</h1>
          <form className="flex gap-[10px]" onSubmit={(e) => e.preventDefault()}>
            <input
              aria-label="Tracking number"
              value={code}
              onChange={(e) => setCode(e.target.value)}
              className="h-[33px] min-w-0 flex-1 rounded-md border border-gray-200 px-[13px] outline-none"
            />
            <button type="submit" className="h-[33px] rounded-md bg-[#2563eb] px-[17px] font-semibold text-white">Track</button>
          </form>
        </section>

        <div className="grid grid-cols-3 gap-[21px]">
          <section className={`${CARD} col-span-2 p-[13px]`}>
            <div className="relative h-[395px] overflow-hidden rounded-lg">
              <TrackingMap />
              <div className="absolute top-[9px] left-[9px] flex flex-col overflow-hidden rounded-sm border-2 border-black/20 bg-white bg-clip-padding">
                <button type="button" aria-label="Zoom in" className="flex size-[25px] items-center justify-center border-b border-gray-300">
                  <svg viewBox="0 0 12 12" className="size-3" stroke="#000" strokeWidth="2"><path d="M6 1v10M1 6h10" /></svg>
                </button>
                <button type="button" aria-label="Zoom out" className="flex size-[25px] items-center justify-center">
                  <svg viewBox="0 0 12 12" className="size-3" stroke="#000" strokeWidth="2"><path d="M1 6h10" /></svg>
                </button>
              </div>
              <button type="button" aria-label="Layers" className="absolute top-[9px] right-[9px] size-7 rounded-sm border-2 border-black/20 bg-white bg-clip-padding" />
              <div className="absolute right-0 bottom-0 flex items-center gap-[3px] bg-white/80 px-1 font-['Liberation_Sans',sans-serif] text-[10px] leading-[14px] text-[#333]">
                <svg viewBox="0 0 12 8" className="h-[7px] w-[10px]">
                  <path fill="#4c7be1" d="M0 0h12v4H0z" />
                  <path fill="#ffd500" d="M0 4h12v3H0z" />
                  <path fill="#e0bc00" d="M0 7h12v1H0z" />
                </svg>
                <span><a href="#leaflet" className="text-[#0078a8]">Leaflet</a> | © OpenStreetMap contributors</span>
              </div>
            </div>
            <div className="mt-[11px] flex items-center gap-[6px] rounded-lg border border-gray-200 bg-[#f0fdf4] px-3 py-[9px] text-[#166534]">
              <span className="size-3 rounded-full bg-[radial-gradient(circle_at_70%_35%,#6ff59b,#4fc98c_55%,#3f9a80)]" />
              Live tracking active
            </div>
          </section>

          <section className={`${CARD} p-5`}>
            <h2 className="mb-1 text-sm leading-[22px] font-semibold">Tracking #1862FF27</h2>
            <dl className="flex flex-col gap-px">
              {DETAILS.map(([name, value]) => (
                <div key={name} className="flex gap-[3px]">
                  <dt className="text-[#6b7280]">{name}:</dt>
                  <dd>{value}</dd>
                </div>
              ))}
            </dl>
          </section>
        </div>
      </main>
    </div>
  );
}
